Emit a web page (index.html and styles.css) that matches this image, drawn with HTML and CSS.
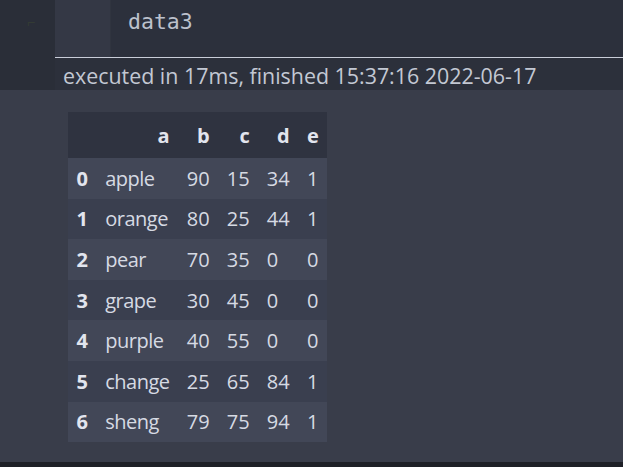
FILE: index.html
```html
<!DOCTYPE html>
<html>
<head>
<meta charset="utf-8">
<link rel="stylesheet" href="styles.css">
</head>
<body>
<div class="page">
  <div class="input-row">
    <div class="gutter"><span class="mark">⌐</span></div>
    <div class="input-area">
      <div class="prompt"></div>
      <div class="code">data3</div>
    </div>
  </div>
  <div class="exec-row">
    <div class="gutter"></div>
    <div class="exec">executed in 17ms, finished 15:37:16 2022-06-17</div>
  </div>
  <div class="output">
    <table class="df">
      <thead>
        <tr><th></th><th>a</th><th>b</th><th>c</th><th>d</th><th>e</th></tr>
      </thead>
      <tbody>
        <tr><th>0</th><td>apple</td><td>90</td><td>15</td><td>34</td><td>1</td></tr>
        <tr><th>1</th><td>orange</td><td>80</td><td>25</td><td>44</td><td>1</td></tr>
        <tr><th>2</th><td>pear</td><td>70</td><td>35</td><td>0</td><td>0</td></tr>
        <tr><th>3</th><td>grape</td><td>30</td><td>45</td><td>0</td><td>0</td></tr>
        <tr><th>4</th><td>purple</td><td>40</td><td>55</td><td>0</td><td>0</td></tr>
        <tr><th>5</th><td>change</td><td>25</td><td>65</td><td>84</td><td>1</td></tr>
        <tr><th>6</th><td>sheng</td><td>79</td><td>75</td><td>94</td><td>1</td></tr>
      </tbody>
    </table>
  </div>
  <div class="bottom"></div>
</div>
</body>
</html>
```

FILE: styles.css
```css
html, body {
  margin: 0;
  padding: 0;
  background: #393d4a;
}
.page {
  width: 623px;
  height: 467px;
  display: flex;
  flex-direction: column;
  font-family: "Open Sans", "Noto Sans", sans-serif;
}
.input-row {
  display: flex;
  height: 58px;
  background: #2b2f3a;
}
.gutter {
  width: 55px;
  flex: none;
  background: #2a2e38;
  position: relative;
}
.mark {
  position: absolute;
  left: 27px;
  top: 12px;
  font-size: 14px;
  color: #333b34;
}
.input-area {
  flex: 1;
  display: flex;
  border-bottom: 1px solid #c9cdd8;
  box-sizing: border-box;
}
.prompt {
  width: 55px;
  background: #343845;
  border-right: 1px solid #30343f;
}
.code {
  flex: 1;
  background: #2c303c;
  padding-left: 17px;
  padding-top: 8px;
  font-family: "DejaVu Sans Mono", monospace;
  font-size: 21.5px;
  line-height: 28px;
  color: #bcc1cc;
}
.exec-row {
  display: flex;
  height: 32px;
  background: #2c303b;
}
.exec {
  padding-left: 8px;
  font-size: 21.4px;
  line-height: 36px;
  color: #c3c8d3;
  white-space: nowrap;
}
.output {
  flex: 1;
  padding: 22px 0 0 68px;
  background: #393d4a;
}
.bottom {
  height: 5px;
  background: #1e2027;
}
.df {
  border-collapse: collapse;
  font-size: 20px;
  color: #d6dae3;
}
.df th, .df td {
  padding: 0 8.6px;
  white-space: nowrap;
}
.df thead tr {
  height: 46px;
  background: #2f3340;
}
.df thead th {
  text-align: right;
  font-weight: 700;
  color: #e2e5ee;
}
.df tbody tr {
  height: 40.6px;
}
.df tbody tr:nth-child(odd) {
  background: #424757;
}
.df tbody tr:nth-child(even) {
  background: #3a3f4f;
}
.df tbody th {
  text-align: left;
  font-weight: 700;
  color: #e2e5ee;
}
.df td {
  text-align: left;
}
.df tbody td:first-of-type {
  letter-spacing: -0.5px;
}
```
